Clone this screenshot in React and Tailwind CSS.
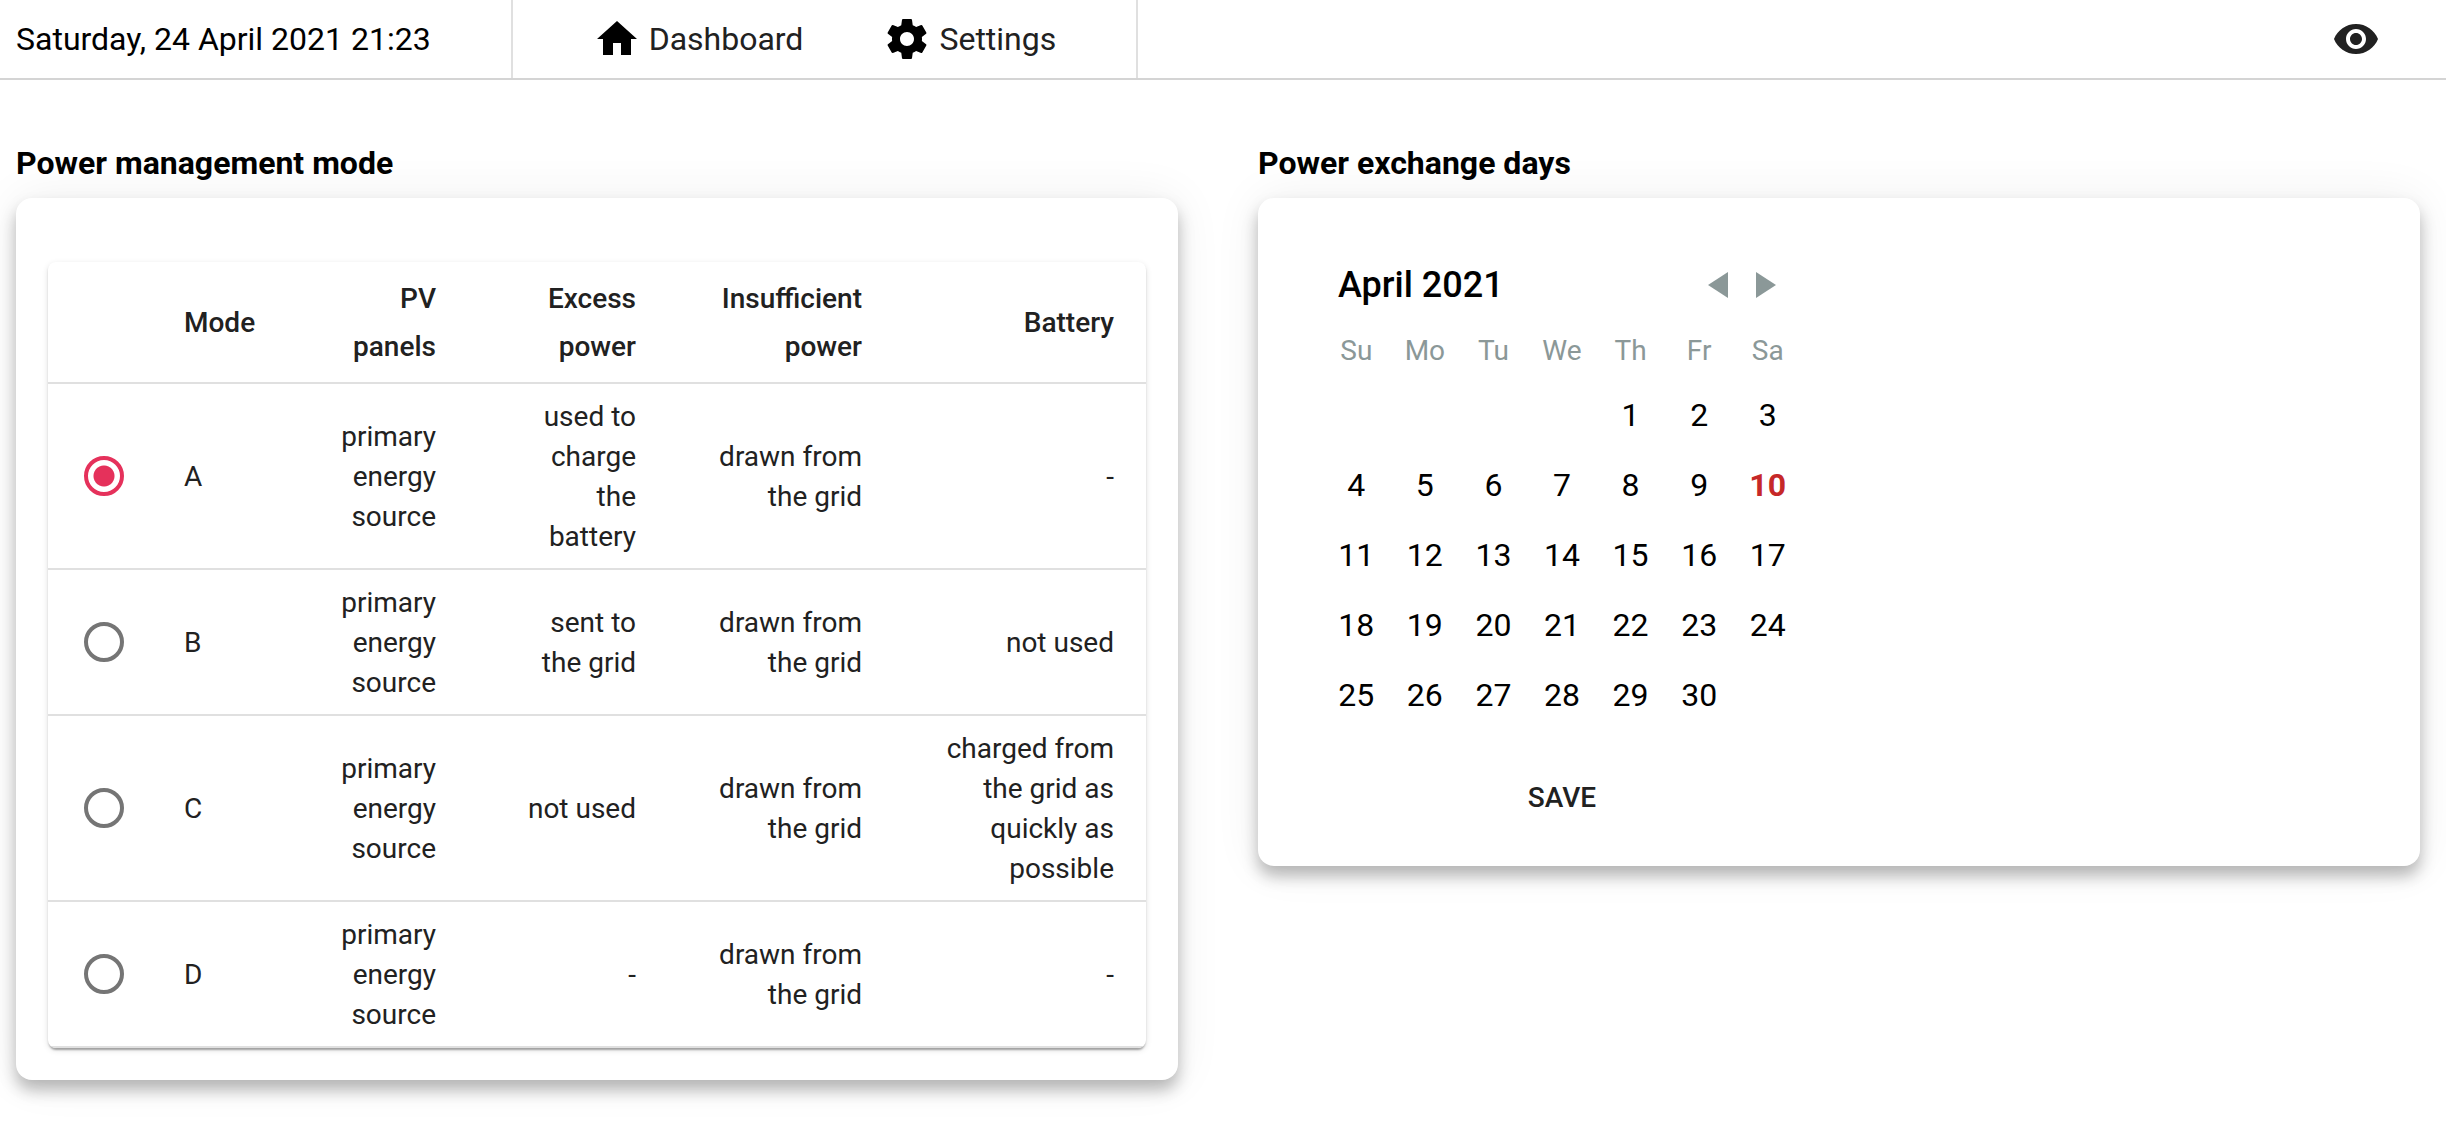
import { useState } from "react";
import { MdHome, MdVisibility } from "react-icons/md";

const MODES = [
  { id: "A", pv: "primary energy source", excess: "used to charge the battery", insufficient: "drawn from the grid", battery: "-" },
  { id: "B", pv: "primary energy source", excess: "sent to the grid", insufficient: "drawn from the grid", battery: "not used" },
  { id: "C", pv: "primary energy source", excess: "not used", insufficient: "drawn from the grid", battery: "charged from the grid as quickly as possible" },
  { id: "D", pv: "primary energy source", excess: "-", insufficient: "drawn from the grid", battery: "-" },
];

const WEEKDAYS = ["Su", "Mo", "Tu", "We", "Th", "Fr", "Sa"];
const DAYS = Array.from({ length: 30 }, (_, i) => i + 1);

function GearIcon({ className }) {
  return (
    <svg viewBox="0 0 24 24" fill="currentColor" aria-hidden="true" className={className}>
      <path d="M19.43 12.98c.04-.32.07-.64.07-.98s-.03-.66-.07-.98l2.11-1.65c.19-.15.24-.42.12-.64l-2-3.46c-.12-.22-.39-.3-.61-.22l-2.49 1c-.52-.4-1.08-.73-1.69-.98l-.38-2.65C14.46 2.18 14.25 2 14 2h-4c-.25 0-.46.18-.49.42l-.38 2.65c-.61.25-1.17.59-1.69.98l-2.49-1c-.23-.09-.49 0-.61.22l-2 3.46c-.13.22-.07.49.12.64l2.11 1.65c-.04.32-.07.65-.07.98s.03.66.07.98l-2.11 1.65c-.19.15-.24.42-.12.64l2 3.46c.12.22.39.3.61.22l2.49-1c.52.4 1.08.73 1.69.98l.38 2.65c.03.24.24.42.49.42h4c.25 0 .46-.18.49-.42l.38-2.65c.61-.25 1.17-.59 1.69-.98l2.49 1c.23.09.49 0 .61-.22l2-3.46c.12-.22.07-.49-.12-.64l-2.11-1.65zM12 15.5c-1.93 0-3.5-1.57-3.5-3.5s1.57-3.5 3.5-3.5 3.5 1.57 3.5 3.5-1.57 3.5-3.5 3.5z" />
    </svg>
  );
}

function Header() {
  return (
    <header className="flex h-20 items-stretch border-b-2 border-[#d4d4d4] text-[32px] leading-10">
      <div className="flex items-center border-r-2 border-[#e0e0e0] pr-20 pl-4 text-black">
        <time dateTime="2021-04-24T21:23">Saturday, 24 April 2021 21:23</time>
      </div>
      <nav className="flex items-center gap-20 border-r-2 border-[#e0e0e0] px-20">
        <a href="#dashboard" className="flex items-center gap-2">
          <MdHome className="size-12 text-black" />
          Dashboard
        </a>
        <a href="#settings" className="flex items-center gap-2">
          <GearIcon className="size-12 text-black" />
          Settings
        </a>
      </nav>
      <button type="button" aria-label="Toggle contrast" className="mr-[66px] ml-auto">
        <MdVisibility className="size-12" />
      </button>
    </header>
  );
}

function Section({ title, className, children }) {
  return (
    <section>
      <h2 className="text-[32px] leading-[38px] font-bold text-black">{title}</h2>
      <div
        className={`mt-4 rounded-2xl bg-white shadow-[0_10px_16px_rgba(0,0,0,0.27),0_0_48px_rgba(0,0,0,0.07)] ${className}`}
      >
        {children}
      </div>
    </section>
  );
}

function ModeTable() {
  const [mode, setMode] = useState("A");
  const head = "pt-[13px] pb-[11px] pr-12 pl-8 font-medium";
  const cell = "pt-[13px] pb-[11px] pr-12 pl-8 text-right";
  return (
    <div className="overflow-hidden rounded-lg shadow-[0_4px_2px_-2px_rgba(0,0,0,0.2),0_2px_2px_rgba(0,0,0,0.14),0_2px_6px_rgba(0,0,0,0.12)]">
      <table className="w-full table-fixed border-separate border-spacing-0 text-[28px] leading-10">
        <colgroup>
          <col className="w-[104px]" />
          <col className="w-[155px]" />
          <col className="w-[177px]" />
          <col className="w-[200px]" />
          <col className="w-[226px]" />
          <col className="w-[236px]" />
        </colgroup>
        <thead className="leading-[48px] [&_th]:border-b-2 [&_th]:border-[#e0e0e0]">
          <tr>
            <th aria-label="Selected" />
            <th scope="col" className={`${head} text-left`}>Mode</th>
            <th scope="col" className={`${head} text-right`}>PV panels</th>
            <th scope="col" className={`${head} text-right`}>Excess power</th>
            <th scope="col" className={`${head} text-right`}>Insufficient power</th>
            <th scope="col" className="px-8 pt-[13px] pb-[11px] text-right font-medium">Battery</th>
          </tr>
        </thead>
        <tbody className="[&_td]:border-b-2 [&_td]:border-[#e0e0e0]">
          {MODES.map((m) => (
            <tr key={m.id}>
              <td className="pl-9">
                <input
                  type="radio"
                  name="mode"
                  id={`mode-${m.id}`}
                  checked={mode === m.id}
                  onChange={() => setMode(m.id)}
                  className="block size-10 appearance-none rounded-full border-4 border-[#757575] checked:border-[#e5315b] checked:bg-[radial-gradient(circle,#e5315b_10px,transparent_11px)]"
                />
              </td>
              <td className="pt-[13px] pr-12 pb-[11px] pl-8">
                <label htmlFor={`mode-${m.id}`}>{m.id}</label>
              </td>
              <td className={cell}>{m.pv}</td>
              <td className={cell}>{m.excess}</td>
              <td className={cell}>{m.insufficient}</td>
              <td className="px-8 pt-[13px] pb-[11px] text-right">{m.battery}</td>
            </tr>
          ))}
        </tbody>
      </table>
    </div>
  );
}

function Calendar() {
  return (
    <div className="flex w-[480px] flex-col">
      <div className="flex h-[90px] items-center pr-3 pl-4">
        <h3 className="mr-auto text-[36px] leading-[42px] font-medium text-black">April 2021</h3>
        <button type="button" aria-label="Previous month" className="flex size-12 items-center justify-center text-[#8b9898]">
          <svg viewBox="0 0 20 26" className="h-[26px] w-5" fill="currentColor">
            <path d="M20 0v26L0 13z" />
          </svg>
        </button>
        <button type="button" aria-label="Next month" className="flex size-12 items-center justify-center text-[#8b9898]">
          <svg viewBox="0 0 20 26" className="h-[26px] w-5" fill="currentColor">
            <path d="M0 0v26l20-13z" />
          </svg>
        </button>
      </div>
      <div className="mb-2 grid h-[42px] grid-cols-7 items-center text-center text-[28px] text-[#8b9898]">
        {WEEKDAYS.map((d) => (
          <span key={d}>{d}</span>
        ))}
      </div>
      <div className="grid auto-rows-[70px] grid-cols-7 text-[32px] text-black">
        {DAYS.map((d) => (
          <button
            key={d}
            type="button"
            className={`${d === 1 ? "col-start-5" : ""} ${d === 10 ? "font-bold text-[#c62828]" : ""}`}
          >
            {d}
          </button>
        ))}
      </div>
      <button type="button" className="mt-8 h-[72px] self-center px-4 text-[28px] font-medium">
        SAVE
      </button>
    </div>
  );
}

export default function App() {
  return (
    <div className="min-h-screen bg-white font-[Roboto,sans-serif] text-[#212121]">
      <Header />
      <main className="grid grid-cols-2 items-start gap-20 pt-16 pr-[26px] pb-16 pl-4">
        <Section title="Power management mode" className="px-8 pt-16 pb-8">
          <ModeTable />
        </Section>
        <Section title="Power exchange days" className="px-16 pt-[42px] pb-8">
          <Calendar />
        </Section>
      </main>
    </div>
  );
}
